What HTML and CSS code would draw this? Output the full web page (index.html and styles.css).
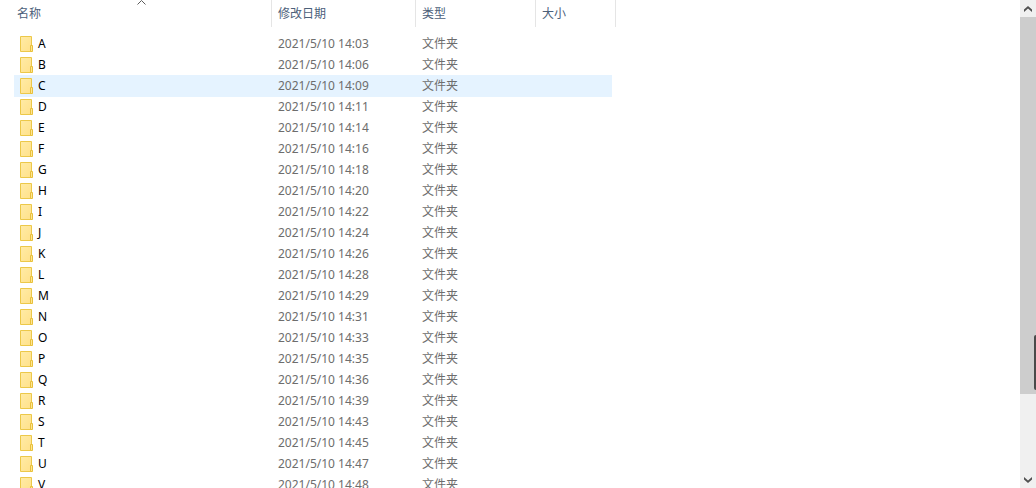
FILE: index.html
```
<!DOCTYPE html>
<html lang="zh-CN">
  <head>
    <meta charset="UTF-8" />
    <meta name="viewport" content="width=device-width, initial-scale=1.0" />
    <title>文件夹</title>
    <link rel="stylesheet" href="styles.css">
  </head>
  <body>
    <svg width="0" height="0" class="symbols" aria-hidden="true">
      <linearGradient id="fill" x1="0" y1="0" x2="1" y2="1">
        <stop offset="0" stop-color="#ffeba6" />
        <stop offset="1" stop-color="#ffe18a" />
      </linearGradient>
      <symbol id="folder" viewBox="0 0 13 16">
        <path d="M.5 .5h11v15H.5z" fill="url(#fill)" stroke="#ecc849" />
        <path d="M10.5 9.5h2v6h-2z" fill="#ffe591" stroke="#e8c03c" />
      </symbol>
    </svg>
    <div class="explorer">
      <main class="list">
        <table id="files">
          <colgroup>
            <col class="col-name" />
            <col class="col-date" />
            <col class="col-type" />
            <col class="col-size" />
          </colgroup>
          <thead>
            <tr>
              <th class="sorted" aria-sort="ascending">
                名称
                <svg class="sort" width="9" height="5" viewBox="0 0 9 5">
                  <path d="M.5 4.5l4-4 4 4" fill="none" stroke="#5c5c5c" />
                </svg>
              </th>
              <th>修改日期</th>
              <th>类型</th>
              <th>大小</th>
            </tr>
          </thead>
          <tbody id="rows"></tbody>
        </table>
      </main>
      <div class="scrollbar">
        <button type="button" aria-label="向上滚动">
          <svg width="8" height="6" viewBox="0 0 8 6">
            <path d="M0 3.5L4 0l4 3.500V6L4 2.500 0 6z" fill="#505050" />
          </svg>
        </button>
        <div class="track"><div class="thumb"></div></div>
        <button type="button" aria-label="向下滚动">
          <svg width="8" height="6" viewBox="0 0 8 6">
            <path d="M0 0l4 3.500L8 0v2.500L4 6 0 2.500z" fill="#505050" />
          </svg>
        </button>
      </div>
      <div class="side-tab"></div>
    </div>
    <script>
      const times = [
        '14:03', '14:06', '14:09', '14:11', '14:14', '14:16', '14:18', '14:20',
        '14:22', '14:24', '14:26', '14:28', '14:29', '14:31', '14:33', '14:35',
        '14:36', '14:39', '14:43', '14:45', '14:47', '14:48'
      ];
      document.getElementById('rows').innerHTML = times
        .map((time, i) => {
          const name = String.fromCharCode(65 + i);
          return `<tr class="${name === 'C' ? 'hover' : ''}">
            <td class="name"><svg class="icon" width="13" height="16"><use href="#folder" /></svg>${name}</td>
            <td>2021/5/10 ${time}</td>
            <td>文件夹</td>
            <td></td>
          </tr>`;
        })
        .join('');
    </script>
  </body>
</html>
```

FILE: styles.css
```
* {
  box-sizing: border-box;
}

body {
  margin: 0;
  font-family: "Noto Sans", "Noto Sans CJK SC", sans-serif;
  font-size: 12px;
  color: #6d6d6d;
  background: #fff;
}

.symbols {
  position: absolute;
}

.explorer {
  position: relative;
  display: flex;
  height: 100vh;
  overflow: hidden;
}

.list {
  flex: 1;
  padding-left: 14px;
  overflow: hidden;
}

table {
  table-layout: fixed;
  width: 602px;
  border-collapse: separate;
  border-spacing: 0;
}

.col-name {
  width: 258px;
}

.col-date {
  width: 144px;
}

.col-type {
  width: 120px;
}

.col-size {
  width: 80px;
}

th {
  height: 27px;
  padding: 0 6px;
  border-right: 1px solid #e5e5e5;
  font-weight: normal;
  line-height: 16px;
  text-align: left;
  color: #4c607a;
}

th.sorted {
  position: relative;
  padding-left: 3px;
}

.sort {
  position: absolute;
  top: 0;
  left: calc(50% - 6px);
}

/* gap between the header and the first row */
tbody::before {
  content: "";
  display: block;
  height: 6px;
}

td {
  height: 21px;
  padding: 0 6px;
  line-height: 20px;
  white-space: nowrap;
}

td:last-child {
  border-right: 4px solid transparent;
  background-clip: padding-box;
}

.name {
  color: #000;
}

.icon {
  margin-right: 5px;
  vertical-align: -4px;
}

.hover td {
  background-color: #e5f3ff;
}

/* the highlight reaches one pixel into the next row */
.hover + tr td {
  background-image: linear-gradient(#e5f3ff, #e5f3ff);
  background-repeat: no-repeat;
  background-size: 100% 1px;
}

.scrollbar {
  display: flex;
  flex-direction: column;
  width: 16px;
  background: #f0f0f0;
}

.scrollbar button {
  display: flex;
  align-items: center;
  justify-content: center;
  height: 17px;
  padding: 0;
  border: 0;
  background: none;
}

.track {
  flex: 1;
}

.thumb {
  height: 83%;
  background: #cdcdcd;
}

.side-tab {
  position: absolute;
  bottom: 20%;
  right: 0;
  width: 2px;
  height: 55px;
  border-radius: 2px 0 0 2px;
  background: #4a4a4a;
}
```
